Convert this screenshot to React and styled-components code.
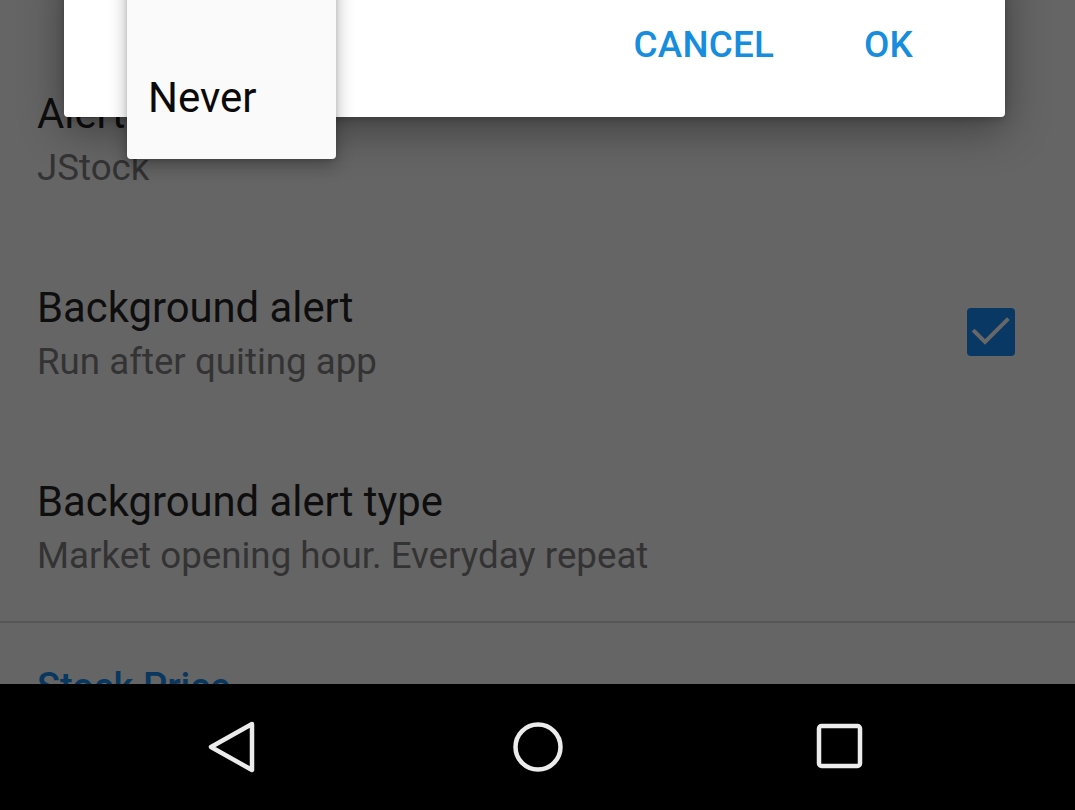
import React from "react";
import styled, { createGlobalStyle } from "styled-components";

const Global = createGlobalStyle`
  html, body { margin: 0; padding: 0; background: #000; }
  body { font-family: Roboto, "Noto Sans", "Liberation Sans", sans-serif; }
  * { box-sizing: border-box; }
`;

const Screen = styled.div`
  position: relative;
  width: 1075px;
  height: 810px;
  overflow: hidden;
  display: flex;
  flex-direction: column;
  font-family: Roboto, "Noto Sans", sans-serif;
`;

const Content = styled.div`
  flex: 1;
  background: #656565;
  overflow: hidden;
  display: flex;
  flex-direction: column;
  padding-top: 39px;
`;

const Row = styled.div`
  flex-shrink: 0;
  display: flex;
  align-items: center;
  padding: 49px 60px 37px 37px;
`;

const TextBlock = styled.div`
  flex: 1;
  display: flex;
  flex-direction: column;
`;

const Title = styled.div`
  font-size: 41.8px;
  line-height: 52px;
  color: #0e0e0e;
  white-space: nowrap;
`;

const Subtitle = styled.div`
  font-size: 36.7px;
  line-height: 56px;
  color: #333333;
  white-space: nowrap;
`;

const CheckBox = styled.div`
  width: 48px;
  height: 48px;
  border-radius: 4px;
  background: #083863;
  margin-top: -8px;
`;

const Divider = styled.div`
  flex-shrink: 0;
  height: 2px;
  background: #575757;
`;

const Category = styled.div`
  flex-shrink: 0;
  font-size: 38px;
  line-height: 52px;
  font-weight: 500;
  color: #083760;
  padding: 38px 37px 0;
  white-space: nowrap;
`;

const NavBar = styled.div`
  height: 126px;
  flex: 0 0 126px;
  background: #000;
  display: flex;
  align-items: center;
  justify-content: space-between;
  padding: 0 211px 0 207px;
`;

const Dialog = styled.div`
  position: absolute;
  left: 64px;
  top: -40px;
  width: 941px;
  height: 157px;
  background: #ffffff;
  border-radius: 4px;
  box-shadow: 0 12px 44px rgba(0, 0, 0, 0.38), 0 2px 8px rgba(0, 0, 0, 0.2);
  display: flex;
  align-items: flex-end;
  justify-content: flex-end;
  padding: 0 92px 40px 0;
  gap: 90px;
`;

const DialogButton = styled.div`
  font-size: 36.8px;
  line-height: 50px;
  font-weight: 500;
  color: #168ddd;
  letter-spacing: 0.2px;
  padding-bottom: 7px;
`;

const Popup = styled.div`
  position: absolute;
  left: 127px;
  top: -60px;
  width: 209px;
  height: 219px;
  background: #fafafa;
  border-radius: 4px;
  box-shadow: 0 6px 18px rgba(0, 0, 0, 0.3), 0 1px 4px rgba(0, 0, 0, 0.15);
  display: flex;
  flex-direction: column;
  justify-content: flex-end;
  padding: 0 0 22px 21px;
`;

const PopupItem = styled.div`
  font-size: 42px;
  line-height: 78px;
  color: #0a0a0a;
`;

const NavIcon = styled.svg`
  display: block;
`;

export default function App() {
  return (
    <>
      <Global />
      <Screen>
        <Content>
          <Row>
            <TextBlock>
              <Title>Alert</Title>
              <Subtitle>JStock</Subtitle>
            </TextBlock>
          </Row>
          <Row>
            <TextBlock>
              <Title>Background alert</Title>
              <Subtitle>Run after quiting app</Subtitle>
            </TextBlock>
            <CheckBox>
              <svg width="48" height="48" viewBox="0 0 48 48">
                <path d="M7.5 23.5 L18 34 L40 12" fill="none" stroke="#676767" strokeWidth="4" strokeLinecap="square" />
              </svg>
            </CheckBox>
          </Row>
          <Row>
            <TextBlock>
              <Title>Background alert type</Title>
              <Subtitle>Market opening hour. Everyday repeat</Subtitle>
            </TextBlock>
          </Row>
          <Divider />
          <Category>Stock Price</Category>
        </Content>
        <NavBar>
          <NavIcon width="52" height="56" viewBox="0 0 52 56">
            <path d="M45 5 L4 28 L45 51 Z" fill="none" stroke="#ececec" strokeWidth="4.5" strokeLinejoin="round" />
          </NavIcon>
          <NavIcon width="54" height="54" viewBox="0 0 54 54">
            <circle cx="27" cy="27" r="22.5" fill="none" stroke="#ececec" strokeWidth="4.5" />
          </NavIcon>
          <NavIcon width="48" height="48" viewBox="0 0 48 48">
            <rect x="3" y="3" width="41" height="40" rx="2.5" fill="none" stroke="#ececec" strokeWidth="4.5" />
          </NavIcon>
        </NavBar>
        <Dialog>
          <DialogButton>CANCEL</DialogButton>
          <DialogButton>OK</DialogButton>
        </Dialog>
        <Popup>
          <PopupItem>Never</PopupItem>
        </Popup>
      </Screen>
    </>
  );
}
